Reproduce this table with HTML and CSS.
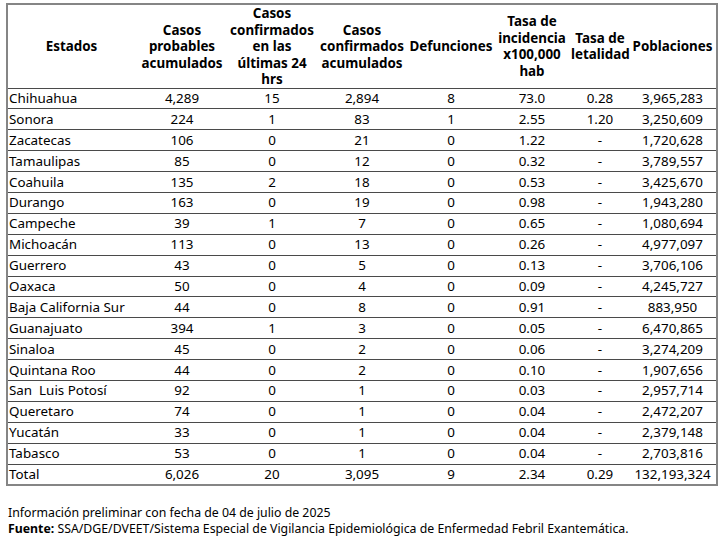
FILE: index.html
```html
<!DOCTYPE html>
<html lang="es">
<head>
<meta charset="utf-8">
<title>Casos por estado</title>
<link rel="stylesheet" href="styles.css">
</head>
<body>
<div class="page">
<table class="tbl">
<colgroup>
<col class="c-estado"><col class="c-prob"><col class="c-24"><col class="c-conf"><col class="c-def"><col class="c-inc"><col class="c-let"><col class="c-pob">
</colgroup>
<thead>
<tr>
<th>Estados</th>
<th>Casos probables acumulados</th>
<th>Casos confirmados en las últimas 24 hrs</th>
<th>Casos confirmados acumulados</th>
<th>Defunciones</th>
<th>Tasa de incidencia x100,000 hab</th>
<th>Tasa de letalidad</th>
<th>Poblaciones</th>
</tr>
</thead>
<tbody>
<tr><td>Chihuahua</td><td>4,289</td><td>15</td><td>2,894</td><td>8</td><td>73.0</td><td>0.28</td><td>3,965,283</td></tr>
<tr><td>Sonora</td><td>224</td><td>1</td><td>83</td><td>1</td><td>2.55</td><td>1.20</td><td>3,250,609</td></tr>
<tr><td>Zacatecas</td><td>106</td><td>0</td><td>21</td><td>0</td><td>1.22</td><td>-</td><td>1,720,628</td></tr>
<tr><td>Tamaulipas</td><td>85</td><td>0</td><td>12</td><td>0</td><td>0.32</td><td>-</td><td>3,789,557</td></tr>
<tr><td>Coahuila</td><td>135</td><td>2</td><td>18</td><td>0</td><td>0.53</td><td>-</td><td>3,425,670</td></tr>
<tr><td>Durango</td><td>163</td><td>0</td><td>19</td><td>0</td><td>0.98</td><td>-</td><td>1,943,280</td></tr>
<tr><td>Campeche</td><td>39</td><td>1</td><td>7</td><td>0</td><td>0.65</td><td>-</td><td>1,080,694</td></tr>
<tr><td>Michoacán</td><td>113</td><td>0</td><td>13</td><td>0</td><td>0.26</td><td>-</td><td>4,977,097</td></tr>
<tr><td>Guerrero</td><td>43</td><td>0</td><td>5</td><td>0</td><td>0.13</td><td>-</td><td>3,706,106</td></tr>
<tr><td>Oaxaca</td><td>50</td><td>0</td><td>4</td><td>0</td><td>0.09</td><td>-</td><td>4,245,727</td></tr>
<tr><td>Baja California Sur</td><td>44</td><td>0</td><td>8</td><td>0</td><td>0.91</td><td>-</td><td>883,950</td></tr>
<tr><td>Guanajuato</td><td>394</td><td>1</td><td>3</td><td>0</td><td>0.05</td><td>-</td><td>6,470,865</td></tr>
<tr><td>Sinaloa</td><td>45</td><td>0</td><td>2</td><td>0</td><td>0.06</td><td>-</td><td>3,274,209</td></tr>
<tr><td>Quintana Roo</td><td>44</td><td>0</td><td>2</td><td>0</td><td>0.10</td><td>-</td><td>1,907,656</td></tr>
<tr><td class="pre">San  Luis Potosí</td><td>92</td><td>0</td><td>1</td><td>0</td><td>0.03</td><td>-</td><td>2,957,714</td></tr>
<tr><td>Queretaro</td><td>74</td><td>0</td><td>1</td><td>0</td><td>0.04</td><td>-</td><td>2,472,207</td></tr>
<tr><td>Yucatán</td><td>33</td><td>0</td><td>1</td><td>0</td><td>0.04</td><td>-</td><td>2,379,148</td></tr>
<tr><td>Tabasco</td><td>53</td><td>0</td><td>1</td><td>0</td><td>0.04</td><td>-</td><td>2,703,816</td></tr>
<tr><td>Total</td><td>6,026</td><td>20</td><td>3,095</td><td>9</td><td>2.34</td><td>0.29</td><td>132,193,324</td></tr>
</tbody>
</table>
<div class="notes">
<p>Información preliminar con fecha de 04 de julio de 2025</p>
<p><b>Fuente:</b> SSA/DGE/DVEET/Sistema Especial de Vigilancia Epidemiológica de Enfermedad Febril Exantemática.</p>
</div>
</div>
</body>
</html>
```
FILE: styles.css
```css
html, body {
  margin: 0;
  padding: 0;
  background: #ffffff;
}
body {
  font-family: "Noto Sans", "Open Sans", "DejaVu Sans", sans-serif;
  color: #000;
}
.page {
  padding: 3px 0 0 6px;
}
.tbl {
  border-collapse: collapse;
  table-layout: fixed;
  width: 712px;
  border: 2px solid #858585;
  font-size: 13.4px;
}
.c-estado { width: 128px; }
.c-prob { width: 94px; }
.c-24 { width: 86px; }
.c-conf { width: 94px; }
.c-def { width: 84px; }
.c-inc { width: 78px; }
.c-let { width: 58px; }
.c-pob { width: 88px; }
.tbl th {
  font-weight: 700;
  line-height: 16.5px;
  height: 81px;
  padding: 0;
  text-align: center;
  vertical-align: middle;
  border-bottom: 1px solid #4a4a4a;
}
.tbl td {
  height: 19.9px;
  padding: 0;
  line-height: 19px;
  text-align: center;
  border-bottom: 1px solid #4a4a4a;
  white-space: nowrap;
}
.tbl td:first-child {
  text-align: left;
  padding-left: 1px;
}
.tbl td.pre {
  white-space: pre;
}
.notes {
  margin-top: 19px;
  padding-left: 2px;
  font-size: 12.3px;
  line-height: 15.5px;
}
.notes p {
  margin: 0;
}
```
